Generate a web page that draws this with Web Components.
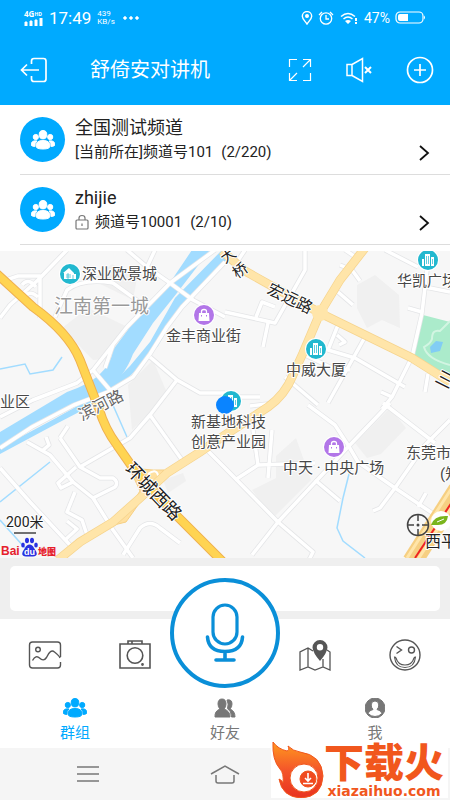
<!DOCTYPE html>
<html lang="zh-CN">
<head>
<meta charset="utf-8">
<meta name="viewport" content="width=device-width, initial-scale=1">
<title>舒倚安对讲机</title>
<style>
  body {
    margin: 0;
    font-family: Roboto, "Noto Sans CJK SC", sans-serif;
    background: #fff;
    color: #222;
  }
</style>
</head>
<body>
<talk-app></talk-app>

<script>
class BaseElement extends HTMLElement {
  constructor() {
    super();
    this.attachShadow({ mode: "open" });
  }

  connectedCallback() {
    this.shadowRoot.innerHTML = /* html */`
      <style>
        * { box-sizing: border-box; }
        svg { display: block; fill: none; stroke: currentColor; }
        button {
          margin: 0;
          padding: 0;
          border: 0;
          background: none;
          color: inherit;
          font: inherit;
          cursor: pointer;
        }
        ${this.constructor.styles}
      </style>
      ${this.template}`;
  }
}

class StatusBar extends BaseElement {
  static get styles() {
    return /* css */`
      :host {
        display: flex;
        align-items: center;
        height: 35px;
        padding: 0 24px;
        background: #00aaff;
        color: #fff;
      }
      .network { width: 20px; font: bold 8px/8px "Noto Sans", sans-serif; }
      .network span { font-size: 5px; vertical-align: top; }
      .time { margin-left: 5px; font-size: 17px; line-height: 20px; }
      .speed { margin: 0 8px 0 6px; font-size: 8px; line-height: 8px; }
      .right { display: flex; align-items: center; gap: 5px; margin-left: auto; }
      .percent { font-size: 14px; line-height: 16px; }
    `;
  }

  get template() {
    return /* html */`
      <div class="network">4G<span>HD</span>
        <svg width="20" height="8" stroke="none"><path fill="currentColor" d="M1 4h2v4H1zM6 3h2v5H6zM11 2h2v6h-2zM16 0h2v8h-2z"/></svg>
      </div>
      <div class="time">17:49</div>
      <div class="speed">439<br>KB/s</div>
      <svg width="16" height="4" stroke="none"><g fill="currentColor"><circle cx="2" cy="2" r="1.3"/><circle cx="8" cy="2" r="1.3"/><circle cx="14" cy="2" r="1.3"/></g></svg>
      <div class="right">
        <svg width="12" height="14" viewBox="0 0 12 14" stroke-width="1.4"><path d="M6 13C4 10 1.300 8 1.300 5.300a4.700 4.700 0 0 1 9.400 0C10.700 8 8 10 6 13z"/><circle cx="6" cy="5" r="1.300" fill="currentColor"/></svg>
        <svg width="16" height="14" viewBox="0 0 16 14" stroke-width="1.3"><circle cx="8" cy="7.500" r="5.700"/><path d="M8 4v4h3M1 4l3-3M15 4l-3-3"/></svg>
        <svg width="20" height="14" viewBox="0 0 20 14" stroke-width="1.5"><path d="M2 5.500q7-6 14 0M4.500 8q4.500-4 9 0"/><path fill="currentColor" stroke="none" d="M6 10q3-2 6 0l-3 3zM16 7h2v3h-2zM16 11h2v2h-2z"/></svg>
        <span class="percent">47%</span>
        <svg width="31" height="13" viewBox="0 0 31 13"><rect x="1" y="1" width="27" height="11" rx="4" stroke-width="1.200"/><path fill="currentColor" stroke="none" d="M5 3h8v7H5q-2 0-2-2V5q0-2 2-2zM29 4.500q2 2 0 4z"/></svg>
      </div>`;
  }
}

class AppHeader extends BaseElement {
  static get styles() {
    return /* css */`
      :host {
        display: flex;
        align-items: center;
        height: 70px;
        padding: 0 16px 0 20px;
        background: #00aaff;
        color: #fff;
      }
      h1 { flex: 1; margin: 0 0 0 42px; font-size: 20px; line-height: 28px; font-weight: 400; }
      .actions { display: flex; align-items: center; gap: 34px; }
    `;
  }

  get template() {
    return /* html */`
      <button aria-label="退出">
        <svg width="28" height="26" viewBox="0 0 28 26" stroke-width="1.700"><path d="M11.500 7V4q0-2.500 2.500-2.500h9.500Q26 1.500 26 4v18q0 2.500-2.500 2.500H14q-2.500 0-2.500-2.500v-3M19 13H1.500M7 7.500L1.500 13 7 18.500"/></svg>
      </button>
      <h1><slot></slot></h1>
      <div class="actions">
        <button aria-label="全屏">
          <svg width="24" height="24" viewBox="0 0 24 24" stroke-width="1.200"><path d="M1.500 9V1.500H9M22.500 15v7.500H15M1.500 15v7.500H9M1.500 22.500L9 15M15 1.500h7.500V9M22.500 1.500L15 9"/></svg>
        </button>
        <button aria-label="静音">
          <svg width="26" height="26" viewBox="0 0 26 26" stroke-width="1.500"><path d="M1 7.500h5v11H1zM6 7.500l10.500-6v23L6 18.500"/><path stroke-width="2" d="M19 10l6 6M25 10l-6 6"/></svg>
        </button>
        <button aria-label="添加">
          <svg width="28" height="28" viewBox="0 0 28 28" stroke-width="1.700"><circle cx="14" cy="14" r="12.500"/><path d="M14 8v12M8 14h12"/></svg>
        </button>
      </div>`;
  }
}

const groupIcon = /* html */`
  <svg width="24" height="20" viewBox="0 0 24 20" stroke="none"><g fill="currentColor">
    <ellipse cx="12" cy="4.700" rx="3.800" ry="4.200"/><circle cx="4.800" cy="7" r="2.600"/><circle cx="19.200" cy="7" r="2.600"/>
    <path d="M5 16q0-5.500 7-5.500t7 5.500q0 3-7 3t-7-3zM4.700 10.800Q0 10.800.3 15q0 1.300 3.500 1.500-.3-3.500 2.200-5.500zM19.300 10.800q4.700 0 4.400 4.200 0 1.300-3.500 1.500.3-3.500-2.200-5.500z"/>
  </g></svg>`;

class ChannelItem extends BaseElement {
  static get styles() {
    return /* css */`
      :host { display: block; padding-left: 20px; }
      button {
        display: flex;
        align-items: center;
        width: 100%;
        height: 70px;
        padding-right: 20px;
        border-bottom: 1px solid #ddd;
        text-align: left;
      }
      .avatar {
        display: grid;
        place-items: center;
        width: 45px;
        height: 45px;
        border-radius: 50%;
        background: #00aaff;
        color: #fff;
      }
      .info { flex: 1; margin-left: 10px; }
      .name { display: block; font-size: 18px; line-height: 24px; }
      .line { display: flex; align-items: center; font-size: 15px; line-height: 24px; }
      .count { margin-left: 8px; }
      .lock { margin-right: 6px; color: #777; }
      .arrow { align-self: flex-end; margin-bottom: 12px; color: #111; }
    `;
  }

  get template() {
    const lock = this.hasAttribute("locked") ? /* html */`
      <svg class="lock" width="14" height="16" viewBox="0 0 14 16" stroke-width="1.200"><rect x="1" y="6" width="12" height="9" rx="1"/><path d="M4 6V4q0-2.500 3-2.500T10 4v2M7 9.500v2.500"/></svg>` : "";
    return /* html */`
      <button>
        <span class="avatar">${groupIcon}</span>
        <span class="info">
          <span class="name"><slot name="name"></slot></span>
          <span class="line">${lock}<slot></slot><span class="count"><slot name="count"></slot></span></span>
        </span>
        <svg class="arrow" width="12" height="18" viewBox="0 0 12 18" stroke-width="1.800"><path d="M2 2l8 7-8 7"/></svg>
      </button>`;
  }
}

class CityMap extends BaseElement {
  static get styles() {
    return /* css */`
      :host { display: block; min-height: 200px; overflow: hidden; background: #f7f7f7; }
      svg { width: 100%; height: 100%; stroke: none; }
      .block { fill: #f0f0f0; }
      .river { fill: #a2dcff; }
      .stream { stroke: #a2dcff; stroke-width: 1.5; }
      .lane-edge { stroke: #e4e5e7; stroke-width: 5; stroke-linejoin: round; }
      .lane { stroke: #fff; stroke-width: 3.5; stroke-linejoin: round; }
      .road-edge { stroke: #f6d48e; stroke-width: 9; }
      .road { stroke: #ffe5a9; stroke-width: 7.5; }
      .highway-edge { stroke: #efb050; stroke-width: 9.5; }
      .highway { stroke: #ffd452; stroke-width: 7.5; }
      text { font-size: 15px; fill: #484848; paint-order: stroke; stroke: #fff; stroke-width: 2px; stroke-linejoin: round; }
      .street { font-size: 16px; fill: #222; }
      .bridge { font-size: 15px; }
      .ring { font-size: 18px; }
      .riverside { fill: #666; }
      .scale { font-size: 14px; fill: #222; }
      .district { font-size: 19px; fill: #999; }
      .red { font: bold 12px "Liberation Sans", sans-serif; fill: #e6202c; stroke: none; }
      .cn { font: 900 9px "Noto Sans CJK SC", sans-serif; }
      .du { font: bold 9px "Liberation Sans", sans-serif; fill: #fff; stroke: none; }
    `;
  }

  get template() {
    const tower = (x, y) => /* html */`
      <g transform="translate(${x} ${y})"><circle r="11" fill="#fff"/><circle r="10" fill="#22b8cf"/>
      <path fill="#fff" d="M-3-6h5V6h-5zM-6-1h2v7h-2zM3-3h3v9H3z"/><path stroke="#22b8cf" stroke-width=".7" d="M-1.500-4v8M.5-4v8M4.500-1v5"/></g>`;
    const bag = (x, y) => /* html */`
      <g transform="translate(${x} ${y})"><circle r="11" fill="#fff"/><circle r="10" fill="#b276e8"/>
      <path fill="#fff" d="M-5-2H5l.5 8h-11z"/><path stroke="#fff" stroke-width="1.300" d="M-2.500-1v-2.500q0-2 2.500-2t2.500 2V-1"/><path stroke="#b276e8" d="M-2.500 0v1.500M2.500 0v1.500"/></g>`;
    return /* html */`
      <svg viewBox="0 251 450 307" preserveAspectRatio="xMidYMid slice" role="img" aria-label="地图">
        <defs>
          <g id="lanes">
            <path d="M67 250L38 280 10 305 0 318M0 282l18-6h22v42M22 285q6-8 14 2M24 300q4-12 14-3"/>
            <path d="M55 317l12-27q16-12 46-7l25 18M127 250l20 17 23 16 23 17 32 17M155 250l-8 17"/>
            <path d="M225 262l-43 45-15 20-17 27-17 23-25 15-34 13-42 22-32 21"/>
            <path d="M215 250l-45 33-43 44-34 43-16 13-44 17-33 17M93 370l17 20M113 345l-8 23"/>
            <path d="M150 357l27 23 23 13h25M177 380l-27 35-20 23-50 29M150 415l32 45"/>
            <path d="M27 442l23 13 23 27 20 16 20 32 20 28M0 468l30 34 40 43M60 438l20 29 20 11h13q6 4 2 9l-22 11"/>
            <path d="M73 482l-12 6-3-5 18-16M87 535l-5-15-15-8 8-20M65 540l12-11-10-8M60 438l8-12M46 437l3 8-7 6"/>
            <path d="M123 555l17-27q10-9 20 0l20 15M205 448l20 20 53 54 35 30-4 8M252 555l26-33 70-75 42-44"/>
            <path d="M308 405l27 20 13 20 10 17 37 26 55 37M395 488l30-43 25-25M383 403l52 40M395 488l-15 20-7 3M418 507l8-14"/>
            <path d="M235 480l23-15 57-2M272 430l-4 48M253 430l5 35M315 480l25 21"/>
            <path d="M305 250v20l-30 53-50-11M268 323l-5 24M275 307l-13-5-6 15M245 250l-8 12"/>
            <path d="M385 250l33 17M427 270l-5 43-10 44-20 40-10 12M425 287l25 5M408 308l14 4M392 397l-11-5"/>
            <path d="M338 325l-10 25 27 8 50 29M365 337l-37 66M285 377l33 28M337 335l8 7-6 3M305 355l25 12 20 3"/>
            <path d="M340 265l12 5 8 11M338 292l15 13M428 374l-3 18M345 250l12 8M275 403l-25 3M225 397h35"/>
          </g>
          <path id="roads" d="M222 251l23 20 75 42 92 45 38 24M365 248l-25 32-20 33-17 40-10 22q-8 20-25 32l-43 28-25 17-33 21-27 25-27 24-33 20-22 18"/>
          <path id="highway" d="M-3 274l36 33q36 26 47 53l19 49q6 20 18 36l16 23 40 44 50 50"/>
        </defs>
        <path class="block" d="M62 328l26-20 50 24-25 26-20 2zM92 280l20-16 25 14-4 22zM357 285l18-10 24 20 1 33-18-8-15 8-10-20zM355 443l35-35 16 20-25 26-14 4zM252 490l24-12v-22l20-18 15 42-38 38zM128 385l25-25 15 35-36 35zM163 480l20-7 3 8-18 12z"/>
        <path class="river" d="M192 250l-25 37-34 36-20 27q-4 28-46 42L0 432v14l43-23 61-31q20-14 29-38l20-31 24-30 33-43z"/>
        <path class="river" d="M222 250l-47 48-25 44-20 24-24 24-50 28-56 30v6l56-30 54-28 24-24 24-26 24-42 48-48z"/>
        <path class="stream" d="M0 369l25-5 5 10 23-4 9-13M0 502l50-40M0 520l25 28M112 403l15 34M352 462l-9 36-6 30 6 13 22 17"/>
        <path fill="#abebcb" d="M423 315l27 7v56l-38-21z"/>
        <path stroke="#d2f5e2" stroke-width="2" d="M450 321l-10 10q-8-2-8 8-1 4-8 8 3 12 26 18"/>
        <path fill="#82cdf4" d="M430 347l6-6 7 1-3 9-9 2z"/>
        <use class="lane-edge" href="#lanes"/><use class="lane" href="#lanes"/>
        <path fill="#ffe0a0" stroke="#f6cf82" d="M128 465q14 6 36 5l-16 21-22 31-16 4q18-14 30-35z"/>
        <path stroke="#fff" stroke-width="2" d="M148 474q8-6 10 1t-8 5"/>
        <use class="road-edge" href="#roads"/><use class="road" href="#roads"/><circle cx="320" cy="313" r="8" fill="#ffe5a9"/>
        <use class="highway-edge" href="#highway"/><use class="highway" href="#highway"/>
        <path stroke="#f6cf82" stroke-width="20" d="M412 562l46-72"/><path stroke="#ffe5a9" stroke-width="3" d="M407 558l46-72M415 564l44-68"/>
        <path stroke="#e22" stroke-width="2" d="M415 558l37-56"/>

        <g transform="translate(70 274)"><circle r="11" fill="#fff"/><circle r="10" fill="#22b8cf"/><path fill="#fff" d="M-6 5v-6h-1l6-5 5 5v1h2v5z"/><path stroke="#22b8cf" stroke-width=".7" d="M-4 1h5M-4 3h5M-2-1v6M3 1v4"/></g>
        ${bag(204, 315)}${bag(334, 447)}${tower(428, 260)}${tower(316, 349)}${tower(231, 401)}
        <circle cx="225" cy="405" r="9" fill="#0a84ff"/>

        <text x="82" y="279">深业欧景城</text>
        <text class="district" x="54" y="313">江南第一城</text>
        <text x="166" y="341">金丰商业街</text>
        <text x="397" y="286">华凯广场</text>
        <text x="286" y="375">中威大厦</text>
        <text x="0" y="407">业区</text>
        <text x="191" y="427">新基地科技</text>
        <text x="191" y="447">创意产业园</text>
        <text x="283" y="473">中天 · 中央广场</text>
        <text x="406" y="458">东莞市</text>
        <text x="440" y="479">(知</text>
        <text class="street bridge" transform="translate(225 264) rotate(-35)">大</text>
        <text class="street bridge" transform="translate(237 279) rotate(-35)">桥</text>
        <text class="street" transform="translate(266 293) rotate(26)">宏远路</text>
        <text class="street riverside" transform="translate(82 421) rotate(-27)">滨河路</text>
        <text class="street ring" transform="translate(124 470) rotate(46)">环城西路</text>
        <text class="street ring" transform="translate(434 381) rotate(27)">三</text>

        <circle cx="441" cy="521" r="10" fill="#fff"/><path fill="#7ab51d" d="M431 525q3-10 17-9-1 9-10 9z"/><path stroke="#fff" d="M437 522l7-3"/>
        <text x="425" y="547" class="street">西平</text>
        <circle cx="418" cy="525" r="10.500" stroke="#444" stroke-width="1.500"/><path stroke="#444" stroke-width="1.500" d="M418 514v7M418 529v7M407 525h7M422 525h7"/><circle cx="418" cy="525" r="1.500" fill="#444"/>

        <text class="scale" x="6" y="527">200米</text>
        <path stroke="#444" stroke-width="1.500" d="M14 533h22"/>
        <text class="red" x="1" y="555">Bai</text>
        <g fill="#2932e1"><ellipse cx="23" cy="545" rx="1.800" ry="2.600"/><ellipse cx="27" cy="540.500" rx="2" ry="2.800"/><ellipse cx="32" cy="540.500" rx="2" ry="2.800"/><ellipse cx="36" cy="545" rx="1.800" ry="2.600"/><path d="M29.500 544.500q3 0 4.500 3.500 6 8-1 8.500h-7q-7-.5-1-8.500 1.500-3.500 4.500-3.500z"/></g>
        <text class="du" x="24" y="555">du</text>
        <text class="red cn" x="38" y="555">地图</text>
      </svg>`;
  }
}

class MessageBar extends BaseElement {
  static get styles() {
    return /* css */`
      :host { display: block; padding: 8px 10px; background: #efefef; }
      input {
        display: block;
        width: 100%;
        height: 45px;
        padding: 0 12px;
        border: 0;
        border-radius: 5px;
        background: #fff;
        font: inherit;
      }
    `;
  }

  get template() {
    return /* html */`<input type="text" aria-label="消息">`;
  }
}

class ToolBar extends BaseElement {
  static get styles() {
    return /* css */`
      :host { display: grid; grid-template-columns: repeat(5, 1fr); height: 71px; position: relative; color: #555; }
      button { display: grid; place-items: center; }
      .talk {
        position: absolute;
        left: calc(50% - 55px);
        bottom: 2px;
        width: 110px;
        height: 110px;
        border: 4px solid #0a8fd8;
        border-radius: 50%;
        background: #fff;
        color: #0a8fd8;
      }
    `;
  }

  get template() {
    return /* html */`
      <button aria-label="图片">
        <svg width="34" height="28" viewBox="0 0 34 28" stroke-width="1.400"><path d="M32.500 16V4q0-3-3-3h-25q-3 0-3 3v20q0 3 3 3h25q3 0 3-3v-3"/><circle cx="10" cy="8.500" r="2.300"/><path d="M4.500 19.500q3.500-6 7-2.500 4 4 7-.5 4-9 8-5.500 5 4 5.500 6"/></svg>
      </button>
      <button aria-label="拍照">
        <svg width="32" height="30" viewBox="0 0 32 30" stroke-width="1.600"><path d="M1 4h30v24H1zM9 4V1h14v3M13 1v3"/><circle cx="16" cy="15.500" r="7.800"/><circle cx="23.500" cy="24.500" r=".6" fill="currentColor"/></svg>
      </button>
      <span></span>
      <button aria-label="位置">
        <svg width="32" height="32" viewBox="0 0 32 32" stroke-width="1.300"><path d="M14 12l-5-3-8 4v18l8-3 7 3 8-3 7 3V13l-3-2M9 9v19M24 20v8"/><path fill="currentColor" stroke="none" fill-rule="evenodd" d="M21 22q-7-8-7.500-13.500a7.500 7.500 0 0 1 15 0Q28 14 21 22zM21 5a3.200 3.200 0 1 0 0 6.400A3.200 3.200 0 0 0 21 5z"/></svg>
      </button>
      <button aria-label="表情">
        <svg width="32" height="32" viewBox="0 0 32 32" stroke-width="1.400"><circle cx="16" cy="16" r="15"/><circle cx="22.500" cy="11" r="3"/><path d="M7.500 7.500l5 3.500-5 3.500"/><path stroke-width="1.100" d="M5.500 18q1 10.500 10.500 10.500T26.500 18q-1 0-1.500 1-2 7-9 7t-9-7q-.5-1-1.500-1z"/></svg>
      </button>
      <button class="talk" aria-label="按住说话">
        <svg width="42" height="60" viewBox="0 0 42 60" stroke-width="3.200"><rect x="9" y="2" width="24" height="39" rx="12"/><path stroke-linecap="round" stroke-width="3.600" d="M3.500 34q1 14.500 17.500 14.500T38.500 34M21 49v8M12 57h18"/></svg>
      </button>`;
  }
}

class TabItem extends BaseElement {
  static get styles() {
    return /* css */`
      :host { display: grid; color: #777; }
      :host([active]) { color: #00aaff; }
      button { display: flex; flex-direction: column; align-items: center; padding: 8px 0 4px; }
      .label { margin-top: 4px; font-size: 15px; line-height: 22px; }
    `;
  }

  get template() {
    const icons = {
      group: groupIcon,
      friend: /* html */`<svg width="24" height="20" viewBox="0 0 24 20" stroke="none"><path fill="currentColor" d="M9 1q4 0 4 5 0 3-2 5 6 2 6 8H2q-.5-6 5-8-2-2-2-5 0-5 4-5zM14 2q5-1 5 4 0 3-2 5 5 2 5 8h-3.500q0-6-4-8.500Q16 6 14 2z"/></svg>`,
      me: /* html */`<svg width="20" height="20" viewBox="0 0 20 20" stroke="none"><circle cx="10" cy="10" r="10" fill="currentColor"/><path fill="#fff" d="M10 3q3.800 0 3.800 4 0 2.700-1.800 4.500 4 .8 5 4-3 3-7 3t-7-3q1-3.200 5-4Q6.200 9.700 6.200 7q0-4 3.800-4z"/></svg>`
    };
    return /* html */`<button>${icons[this.getAttribute("icon")]}<span class="label"><slot></slot></span></button>`;
  }
}

class TabBar extends BaseElement {
  static get styles() {
    return /* css */`
      :host { display: grid; grid-template-columns: repeat(3, 1fr); }
    `;
  }

  get template() {
    return /* html */`<slot></slot>`;
  }
}

class SiteBadge extends BaseElement {
  static get styles() {
    return /* css */`
      :host { display: flex; align-items: center; padding-right: 4px; background: #fff; color: #f1571d; }
      .words { display: flex; flex-direction: column; align-items: center; }
      .name { margin-top: 2px; font-size: 40px; line-height: 40px; font-weight: 900; }
      .url { font: bold 14px/14px "DejaVu Sans", sans-serif; }
    `;
  }

  get template() {
    return /* html */`
      <svg width="53" height="56" viewBox="0 0 53 56" stroke="none">
        <defs><linearGradient id="flame" x2="0" y2="1"><stop stop-color="#ff9a1e"/><stop offset=".5" stop-color="#f4562a"/><stop offset="1" stop-color="#e8321f"/></linearGradient></defs>
        <path fill="url(#flame)" d="M2 0q5 7 14 9 3-1 1-5 5 5 12 6 22 3 23 24-1 21-22 22-19-1-22-19 3 1 4 4 1-10-3-14Q1 18 2 0z"/>
        <circle cx="33" cy="36" r="14" fill="#fff"/><circle cx="37" cy="37" r="8" fill="#f04a20"/>
        <path stroke="#fff" stroke-width="1.600" d="M37 31v8M34 36l3 3 3-3M32 41.500h10"/>
      </svg>
      <div class="words">
        <span class="name">下载火</span>
        <span class="url">xiazaihuo.com</span>
      </div>`;
  }
}

class SystemNav extends BaseElement {
  static get styles() {
    return /* css */`
      :host { display: grid; grid-template-columns: repeat(3, 1fr); height: 52px; padding: 0 19px; position: relative; background: #f5f5f5; color: #777; }
      button { display: grid; place-items: center; }
      site-badge { position: absolute; right: 2px; bottom: 2px; }
    `;
  }

  get template() {
    return /* html */`
      <button aria-label="最近任务"><svg width="22" height="18" viewBox="0 0 22 18" stroke-width="1.500"><path d="M0 2h22M0 9h22M0 16h22"/></svg></button>
      <button aria-label="主页"><svg width="30" height="20" viewBox="0 0 30 20" stroke-width="1.500"><path d="M1 10L15 2l14 8M6 11v6q0 2 2 2h14q2 0 2-2v-6"/></svg></button>
      <button aria-label="返回"><svg width="22" height="18" viewBox="0 0 22 18" stroke-width="1.500"><path d="M7 2L2 7l5 5M2 7h14q4 0 4 4t-4 5H8"/></svg></button>
      <site-badge></site-badge>`;
  }
}

class TalkApp extends BaseElement {
  static get styles() {
    return /* css */`
      :host { display: flex; flex-direction: column; min-height: 100vh; }
      city-map { flex: 1 1 0; margin-top: 6px; }
    `;
  }

  get template() {
    return /* html */`
      <status-bar></status-bar>
      <app-header>舒倚安对讲机</app-header>
      <channel-item>
        <span slot="name">全国测试频道</span>[当前所在]频道号101<span slot="count">(2/220)</span>
      </channel-item>
      <channel-item locked>
        <span slot="name">zhijie</span>频道号10001<span slot="count">(2/10)</span>
      </channel-item>
      <city-map></city-map>
      <message-bar></message-bar>
      <tool-bar></tool-bar>
      <tab-bar>
        <tab-item icon="group" active>群组</tab-item>
        <tab-item icon="friend">好友</tab-item>
        <tab-item icon="me">我</tab-item>
      </tab-bar>
      <system-nav></system-nav>`;
  }
}

customElements.define("status-bar", StatusBar);
customElements.define("app-header", AppHeader);
customElements.define("channel-item", ChannelItem);
customElements.define("city-map", CityMap);
customElements.define("message-bar", MessageBar);
customElements.define("tool-bar", ToolBar);
customElements.define("tab-item", TabItem);
customElements.define("tab-bar", TabBar);
customElements.define("site-badge", SiteBadge);
customElements.define("system-nav", SystemNav);
customElements.define("talk-app", TalkApp);
</script>
</body>
</html>
